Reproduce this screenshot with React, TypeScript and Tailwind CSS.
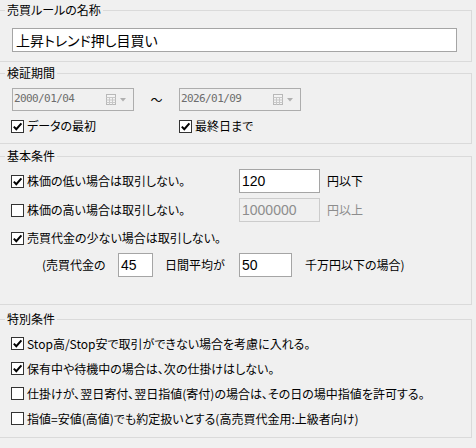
import React from "react";

const jp = "font-['Noto_Sans_CJK_JP',sans-serif] [font-feature-settings:'palt']";

function Check({ checked, label, className = "" }: { checked: boolean; label: string; className?: string }) {
  return (
    <div className={`flex items-center h-[24px] ${className}`}>
      <span className="w-[13px] h-[13px] border border-[#333] bg-white flex items-center justify-center shrink-0">
        {checked && (
          <svg width="11" height="11" viewBox="0 0 11 11">
            <path d="M1.8 5.6 L4.3 8.2 L9.4 2.4" fill="none" stroke="#000" strokeWidth="2" />
          </svg>
        )}
      </span>
      <span className="ml-[3px] text-[12px] leading-[14px] text-black whitespace-nowrap">{label}</span>
    </div>
  );
}

function DateBox({ value }: { value: string }) {
  return (
    <div className="w-[122px] h-[23px] border border-[#adadad] bg-[#f0f0f0] flex items-center pl-[1px]">
      <span className="font-['DejaVu_Sans_Mono',monospace] text-[11px] tracking-[-0.6px] text-[#6d6d6d] flex-1">
        {value}
      </span>
      <svg width="22" height="12" viewBox="0 0 22 12" className="mr-[5px]">
        <rect x="0.5" y="0.5" width="9" height="10" fill="#f4f4f4" stroke="#b8b8b8" />
        <path d="M0.5 3.5 H9.5 M0.5 6 H9.5 M0.5 8.5 H9.5 M3.5 3.5 V10.5 M6.5 3.5 V10.5" stroke="#c8c8c8" strokeWidth="1" />
        <path d="M14 4 L20 4 L17 7.5 Z" fill="#b0b0b0" />
      </svg>
    </div>
  );
}

function NumBox({ value, w, disabled = false }: { value: string; w: string; disabled?: boolean }) {
  return (
    <div
      className={`${w} h-[24px] border flex items-center pl-[2px] font-['Liberation_Sans',sans-serif] text-[14px] ${
        disabled ? "border-[#cccccc] bg-[#f0f0f0] text-[#8d8d8d]" : "border-[#a5a5a5] bg-white text-black"
      }`}
    >
      {value}
    </div>
  );
}

function Group({ title, className = "", children }: { title: string; className?: string; children: React.ReactNode }) {
  return (
    <fieldset className={`border border-l-0 border-[#dadada] w-[472px] ${className}`}>
      <legend className="ml-[5px] px-[2px] text-[12px] leading-[14px] text-black">{title}</legend>
      {children}
    </fieldset>
  );
}

export default function App() {
  return (
    <div className={`w-[476px] h-[448px] bg-[#f0f0f0] overflow-hidden ${jp}`}>
      <Group title="売買ルールの名称" className="mt-[3px] pt-[11px] pb-[9px]">
        <div className="ml-[12px] w-[445px] h-[24px] border border-[#a5a5a5] bg-white flex items-center pl-[3px] text-[14px] text-black">
          上昇トレンド押し目買い
        </div>
      </Group>

      <Group title="検証期間" className="mt-[4px] pt-[8px] pb-[5px]">
        <div className="flex items-center ml-[12px]">
          <DateBox value="2000/01/04" />
          <span className="w-[45px] text-center text-[12px] text-black">〜</span>
          <DateBox value="2026/01/09" />
        </div>
        <div className="flex mt-[3px]">
          <Check checked label="データの最初" className="ml-[11px] w-[168px]" />
          <Check checked label="最終日まで" />
        </div>
      </Group>

      <Group title="基本条件" className="mt-[5px] pt-[6px] pb-[27px]">
        <div className="flex items-center h-[24px]">
          <Check checked label="株価の低い場合は取引しない。" className="ml-[11px] w-[228px]" />
          <NumBox value="120" w="w-[81px]" />
          <span className="ml-[7px] text-[12px]">円以下</span>
        </div>
        <div className="flex items-center h-[24px] mt-[5px]">
          <Check checked={false} label="株価の高い場合は取引しない。" className="ml-[11px] w-[228px]" />
          <NumBox value="1000000" w="w-[81px]" disabled />
          <span className="ml-[7px] text-[12px] text-[#8d8d8d]">円以上</span>
        </div>
        <Check checked label="売買代金の少ない場合は取引しない。" className="ml-[11px] mt-[4px]" />
        <div className="flex items-center h-[24px] mt-[3px] text-[12px]">
          <span className="ml-[42px] w-[76px]">(売買代金の</span>
          <NumBox value="45" w="w-[35px]" />
          <span className="ml-[12px] w-[74px]">日間平均が</span>
          <NumBox value="50" w="w-[53px]" />
          <span className="ml-[13px]">千万円以下の場合)</span>
        </div>
      </Group>

      <Group title="特別条件" className="mt-[7px] pt-[5px] pb-[6px]">
        <div className="ml-[11px] flex flex-col">
          <Check checked label="Stop高/Stop安で取引ができない場合を考慮に入れる。" className="h-[25px]" />
          <Check checked label="保有中や待機中の場合は、次の仕掛けはしない。" className="h-[25px]" />
          <Check checked={false} label="仕掛けが、翌日寄付、翌日指値(寄付)の場合は、その日の場中指値を許可する。" className="h-[25px]" />
          <Check checked={false} label="指値=安値(高値)でも約定扱いとする(高売買代金用:上級者向け)" className="h-[25px]" />
        </div>
      </Group>
    </div>
  );
}
